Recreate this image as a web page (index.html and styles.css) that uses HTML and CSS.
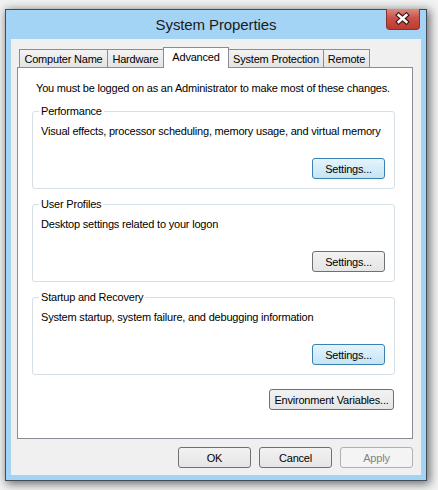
FILE: index.html
```html
<!DOCTYPE html>
<html>
<head>
    <title>System Properties</title>
    <link rel="stylesheet" href="styles.css">
</head>
<body>
    <div class="desktop">
        <div class="window">
            <div class="titlebar">
                <span class="title">System Properties</span>
                <div class="close">
                    <svg width="34" height="21" viewBox="0 0 34 21">
                        <path d="M13 7 L21 14 M21 7 L13 14" stroke="#3b1a16" stroke-width="5" stroke-linecap="square"/>
                        <path d="M13 7 L21 14 M21 7 L13 14" stroke="#ffffff" stroke-width="2.6" stroke-linecap="square"/>
                    </svg>
                </div>
            </div>
            <div class="client">
                <div class="tabs">
                    <div class="tab tab-computer">Computer Name</div>
                    <div class="tab tab-hardware">Hardware</div>
                    <div class="tab tab-advanced selected">Advanced</div>
                    <div class="tab tab-protection">System Protection</div>
                    <div class="tab tab-remote">Remote</div>
                </div>
                <div class="panel">
                    <p class="intro">You must be logged on as an Administrator to make most of these changes.</p>

                    <div class="group">
                        <span class="legend">Performance</span>
                        <p class="desc">Visual effects, processor scheduling, memory usage, and virtual memory</p>
                        <button class="btn btn-settings focused">Settings...</button>
                    </div>

                    <div class="group">
                        <span class="legend">User Profiles</span>
                        <p class="desc">Desktop settings related to your logon</p>
                        <button class="btn btn-settings">Settings...</button>
                    </div>

                    <div class="group">
                        <span class="legend">Startup and Recovery</span>
                        <p class="desc">System startup, system failure, and debugging information</p>
                        <button class="btn btn-settings focused">Settings...</button>
                    </div>

                    <div class="env-row">
                        <button class="btn btn-env">Environment Variables...</button>
                    </div>
                </div>
                <div class="actions">
                    <button class="btn btn-action">OK</button>
                    <button class="btn btn-action">Cancel</button>
                    <button class="btn btn-action" disabled>Apply</button>
                </div>
            </div>
        </div>
    </div>
</body>
</html>
```

FILE: styles.css
```css
body {
    margin: 0;
    background-color: #f2f2f2;
    font-family: "Liberation Sans", Arial, sans-serif;
    font-size: 11px;
    letter-spacing: -0.2px;
    color: #000;
}

.desktop {
    height: 490px;
    box-sizing: border-box;
    padding: 9px 0 0 5px;
    overflow: hidden;
}

/* window frame */
.window {
    position: relative;
    width: 422px;
    height: 472px;
    box-sizing: border-box;
    border: 1px solid #434d58;
    background-color: #a4d4f5;
    box-shadow: 2px 2px 9px 1px rgba(0, 0, 0, 0.55);
    display: flex;
    flex-direction: column;
}

.titlebar {
    height: 29px;
    display: flex;
    align-items: center;
    justify-content: center;
}

.title {
    font-size: 15px;
    letter-spacing: -0.1px;
    color: #1b1b1b;
}

.close {
    position: absolute;
    top: -1px;
    right: 6px;
    width: 34px;
    height: 21px;
    box-sizing: border-box;
    border: 1px solid #8a3129;
    border-top: none;
    border-radius: 0 0 4px 4px;
    background: linear-gradient(#dd8a80, #c9524a 45%, #c0392f);
    display: flex;
}

.close svg {
    margin: -1px 0 0 -1px;
}

.client {
    flex: 1;
    margin: 0 5px 5px;
    padding: 8px 8px 0 6px;
    background-color: #f0f0f0;
    display: flex;
    flex-direction: column;
}

/* tabs */
.tabs {
    display: flex;
    align-items: flex-end;
    height: 21px;
    margin: 0 0 -1px 2px;
    position: relative;
    z-index: 1;
}

.tab {
    height: 19px;
    box-sizing: border-box;
    border: 1px solid #898c95;
    background: linear-gradient(#f3f3f3, #e3e3e3);
    display: flex;
    align-items: center;
    justify-content: center;
    padding-top: 1px;
    white-space: nowrap;
}

.tab + .tab {
    margin-left: -1px;
}

.tab.selected {
    height: 21px;
    background: #fff;
    border-bottom: none;
    padding-top: 0;
    padding-bottom: 2px;
}

.tab-computer { width: 89px; }
.tab-hardware { width: 57px; }
.tab-advanced { width: 66px; }
.tab-protection { width: 96px; }
.tab-remote { width: 47px; }

.panel {
    height: 372px;
    box-sizing: border-box;
    border: 1px solid #898c95;
    background-color: #fff;
    padding: 13px 17px 0 14px;
}

.intro {
    margin: 0 0 15px 4px;
    line-height: 15px;
    white-space: nowrap;
}

/* group boxes */
.group {
    height: 78px;
    box-sizing: border-box;
    border: 1px solid #d5dfe5;
    border-radius: 3px;
    padding: 0 9px 9px 8px;
    margin-bottom: 15px;
    display: flex;
    flex-direction: column;
}

.legend {
    align-self: flex-start;
    margin: -8px 0 0 -2px;
    padding: 0 2px;
    line-height: 15px;
    background-color: #fff;
}

.desc {
    margin: 5px 0 0;
    line-height: 15px;
    white-space: nowrap;
}

.btn {
    height: 21px;
    box-sizing: border-box;
    padding: 0;
    border: 1px solid #707070;
    border-radius: 3px;
    background: linear-gradient(#f2f2f2, #e5e5e5);
    font-family: inherit;
    font-size: 11px;
    letter-spacing: -0.2px;
    color: #000;
}

.btn.focused {
    border-color: #3c7fb1;
    background: linear-gradient(#e5f4fc, #c4e5f6);
}

.btn:disabled {
    border-color: #adb2b5;
    background: #f4f4f4;
    color: #838383;
}

.btn-settings {
    width: 73px;
    margin-top: auto;
    align-self: flex-end;
}

.env-row {
    display: flex;
    justify-content: flex-end;
    margin-top: -1px;
    padding-right: 1px;
}

.btn-env {
    width: 125px;
}

.actions {
    display: flex;
    justify-content: flex-end;
    gap: 8px;
    margin-top: 8px;
}

.btn-action {
    width: 73px;
}
```
